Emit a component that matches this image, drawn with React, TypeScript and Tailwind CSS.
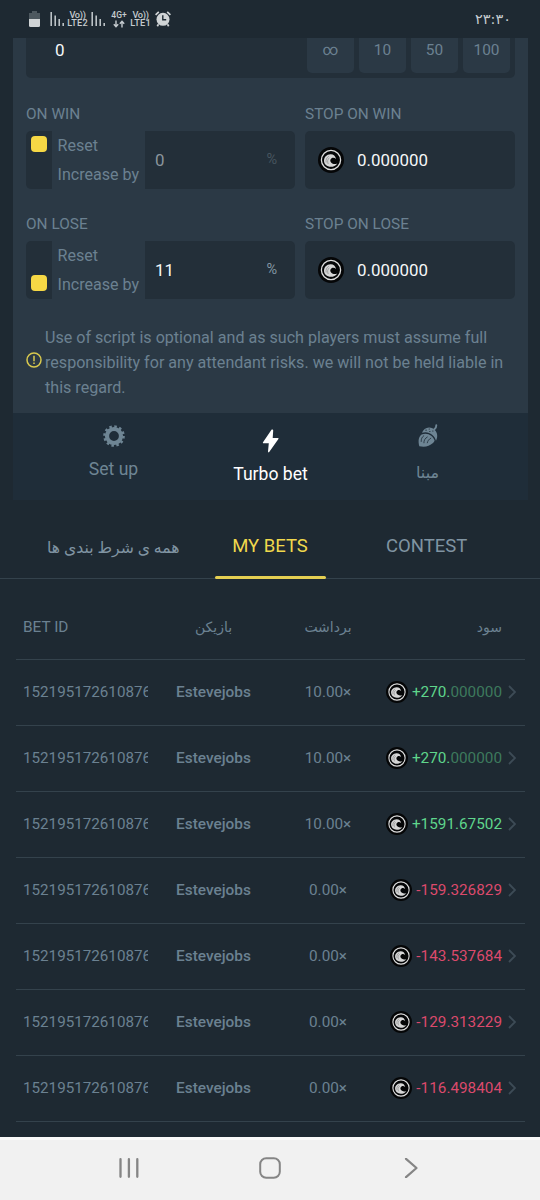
import { useState } from 'react'
import type { ReactNode } from 'react'
import clsx from 'clsx'

type Bet = {
  id: string
  player: string
  payout: string
  profit: string
  rest?: string
}

const BETS: Bet[] = [
  { id: '152195172610876', player: 'Estevejobs', payout: '10.00×', profit: '+270.', rest: '000000' },
  { id: '152195172610876', player: 'Estevejobs', payout: '10.00×', profit: '+270.', rest: '000000' },
  { id: '152195172610876', player: 'Estevejobs', payout: '10.00×', profit: '+1591.67502' },
  { id: '152195172610876', player: 'Estevejobs', payout: '0.00×', profit: '-159.326829' },
  { id: '152195172610876', player: 'Estevejobs', payout: '0.00×', profit: '-143.537684' },
  { id: '152195172610876', player: 'Estevejobs', payout: '0.00×', profit: '-129.313229' },
  { id: '152195172610876', player: 'Estevejobs', payout: '0.00×', profit: '-116.498404' },
]

const PRESETS = ['∞', '10', '50', '100']

const Coin = ({ className }: { className: string }) => (
  <svg viewBox="0 0 26 26" className={clsx('shrink-0', className)}>
    <circle cx="13" cy="13" r="13" fill="#050607" />
    <circle cx="13" cy="13" r="9.6" fill="none" stroke="#dedede" strokeWidth="1.3" />
    <path
      d="M18 12C17.500 9.200 15.500 7.200 12.500 7.300 8.600 7.400 6 10.200 6 13.700c0 3.400 3 6.100 6.700 6.100 2.700 0 5.200-1.200 6.600-3.400-2 1-4.600.9-6-.6-1.500-1.500-1.300-3.700.3-4.600 1.500-.8 3.200-.4 4.400.8z"
      fill="#d6d6d6"
    />
    <path d="M15 12.500c-1 .1-1.500.8-1.300 1.700" stroke="#050607" strokeWidth="1.300" fill="none" />
    <path d="M8.200 15.500c-.6-2.700.5-5 2.600-6.200M10.200 17c-1.100-2.500-.6-4.900 1.300-6.300" stroke="#777" strokeWidth=".6" fill="none" />
  </svg>
)

const SignalIcon = () => (
  <svg viewBox="0 0 15 16" className="h-4 w-[15px]" stroke="#c5cbcf" strokeWidth="1.500">
    <path d="M1.200 1v14M5.200 4.500V15M9.200 8v7M13.200 12v3" />
  </svg>
)

const VolteLabel = ({ sim }: { sim: string }) => (
  <div className="flex w-[21px] flex-col items-center text-[9.200px] leading-[8.500px] font-medium text-[#c5cbcf]">
    <span className="tracking-[-0.300px]">Vo))</span>
    <span className="tracking-[0.200px]">{sim}</span>
  </div>
)

const StatusBar = () => (
  <div className="flex h-[38px] items-center justify-between pr-[29px] pl-[29px]">
    <div className="flex items-center">
      <svg viewBox="0 0 11 16" className="h-4 w-[11px]">
        <path d="M3 0h5v2h3v6H0V2h3z" fill="#4d585f" />
        <path d="M0 8h11v6.500a1.500 1.500 0 0 1-1.500 1.500h-8A1.500 1.500 0 0 1 0 14.500z" fill="#d0d4d6" />
      </svg>
      <div className="ml-[10px] flex items-center">
        <SignalIcon />
        <div className="ml-[2px]"><VolteLabel sim="LTE2" /></div>
        <div className="ml-[3px]"><SignalIcon /></div>
      </div>
      <div className="ml-1 flex w-[18px] flex-col items-center text-[#c5cbcf]">
        <span className="text-[8.500px] leading-[9px] font-medium">4G+</span>
        <svg viewBox="0 0 12 8" className="h-2 w-3" stroke="#c5cbcf" strokeWidth="1.400" fill="none">
          <path d="M3 .5v6M.8 4.300 3 6.700l2.200-2.400M9 7.500v-6M6.800 3.700 9 1.300l2.200 2.400" />
        </svg>
      </div>
      <div className="ml-[2px]"><VolteLabel sim="LTE1" /></div>
      <svg viewBox="0 0 16 16" className="ml-[4px] size-4">
        <circle cx="8" cy="8.300" r="6.500" fill="#d0d4d6" />
        <path d="M.6 3.900 3.800.9M15.400 3.900 12.200.9M3.500 13.200l-1.200 2M12.500 13.200l1.200 2" stroke="#d0d4d6" strokeWidth="1.700" />
        <path d="M7.800 4.300v4.400h3.400" fill="none" stroke="#1e2a33" strokeWidth="1.400" />
      </svg>
    </div>
    <span className="font-['DejaVu_Sans'] text-[14.500px] leading-4 tracking-[-0.900px] text-[#c5cbcf]">۲۳:۳۰</span>
  </div>
)

type StrategyProps = {
  title: string
  stopTitle: string
  increase: boolean
  value: string
  onToggle: () => void
}

const StrategyRow = ({ title, stopTitle, increase, value, onToggle }: StrategyProps) => (
  <div className="flex gap-[10px]">
    <div className="w-[269px]">
      <div className="h-[27px] text-[15.400px] leading-[21px]">{title}</div>
      <div className="flex h-[58px]">
        <button
          onClick={onToggle}
          className={clsx(
            'flex w-[26px] flex-col items-center rounded-l-[5px] bg-[#232f39] px-[5px]',
            increase ? 'justify-end pb-2' : 'justify-start pt-[5px]',
          )}
        >
          <span className="size-4 rounded-[4px] bg-[#f6d845]" />
        </button>
        <div className="flex w-[93px] flex-col pt-px pl-[5.500px] text-[16.100px] whitespace-nowrap">
          <span className="h-[29px] leading-[27px]">Reset</span>
          <span className="leading-[27px]">Increase by</span>
        </div>
        <div className="flex flex-1 items-center justify-between rounded-r-[5px] bg-[#232f39] pr-[18px] pl-[10px]">
          <span className={clsx('mt-px text-[16.900px]', increase ? 'text-[#f5f7f8]' : 'text-[#8b959c]')}>{value}</span>
          <span className={clsx('text-[14.500px]', increase ? 'text-[#8497a3]' : 'text-[#47555f]')}>%</span>
        </div>
      </div>
    </div>
    <div className="w-[210px]">
      <div className="h-[27px] text-[15.400px] leading-[21px]">{stopTitle}</div>
      <div className="flex h-[58px] items-center rounded-[5px] bg-[#232f39] pl-[13px]">
        <Coin className="size-[26px]" />
        <span className="mt-px ml-[13px] text-[16.900px] text-[#f5f7f8]">0.000000</span>
      </div>
    </div>
  </div>
)

type ModeTabProps = {
  icon: ReactNode
  label: string
  active?: boolean
  labelClass?: string
}

const ModeTab = ({ icon, label, active, labelClass }: ModeTabProps) => (
  <button
    className={clsx(
      'flex flex-1 flex-col items-center leading-6',
      active ? 'pt-4 text-white' : 'pt-[11px] text-[#6e8594]',
    )}
  >
    {icon}
    <span className={clsx('mt-[9px]', labelClass ?? 'text-[17.600px]')}>{label}</span>
  </button>
)

const GearIcon = () => (
  <svg viewBox="0 0 24 24" className="size-6 shrink-0">
    <circle cx="12" cy="12" r="7" fill="none" stroke="#6e8594" strokeWidth="4.200" />
    <circle cx="12" cy="12" r="9.500" fill="none" stroke="#6e8594" strokeWidth="2.600" strokeDasharray="2.487 2.487" />
  </svg>
)

const BoltIcon = () => (
  <svg viewBox="0 0 18 24" className="h-6 w-[18px] shrink-0" fill="#fff">
    <path d="M9.500.8 1 13.300c-.3.500 0 1 .5 1h5.300L6 22.600c-.1.800.8 1.100 1.200.5l9.200-13c.3-.500 0-1-.5-1h-5.200l.5-7.700c0-.9-1.200-1.200-1.700-.6z" />
  </svg>
)

const AcornIcon = () => (
  <svg viewBox="0 0 22 24" className="h-6 w-[22px] shrink-0">
    <path d="M4.600 10.400C1.300 13 1 17.300 2.300 22.300c5.400 1.200 10 .2 13.700-3.200.9-.9 1.400-1.700 1.600-2.500C16 11.500 10.500 8 4.600 10.400z" fill="#6e8594" />
    <path d="M5 8.800c1.500-4.700 6.500-7 11-4.200 4.500 2.900 5.300 8 3 12.200C17.400 10.800 11.500 6.800 5 8.800z" fill="#6e8594" />
    <path d="M17.300 5.400c1.400-.8 2-2 2-4.200" fill="none" stroke="#6e8594" strokeWidth="1.900" strokeLinecap="round" />
    <path d="M4.200 17.500c-.2-2.600.8-4.500 2.600-5.800M6.900 18.800c-.1-2.500 1.200-4.600 3.400-5.800M10.300 18.800c.4-2 1.500-3.500 3.500-4.600" fill="none" stroke="#1f2d39" strokeWidth=".8" strokeLinecap="round" />
    <path d="M9 6.200h.1M12.200 5h.1M12.800 7.500h.1M15.800 7h.1" stroke="#1f2d39" strokeWidth="1.200" strokeLinecap="round" />
  </svg>
)

const BetRow = ({ bet }: { bet: Bet }) => {
  const won = bet.profit.startsWith('+')
  return (
    <div className="flex h-[66px] items-center border-b border-[#34424c] pl-[7px] text-[15.300px]">
      <span className="w-[125px] overflow-hidden text-[15.200px] whitespace-nowrap">{bet.id}</span>
      <span className="w-[131px] text-center text-[15.400px] font-medium">{bet.player}</span>
      <span className="w-[98px] text-center">{bet.payout}</span>
      <div className="flex flex-1 items-center justify-end">
        <Coin className="mb-px size-[22px]" />
        <span className={clsx('ml-1', won ? 'text-[#5fd68c]' : 'text-[#dc4a6c]')}>
          {bet.profit}
          {bet.rest && <span className="text-[#3d7a5d]">{bet.rest}</span>}
        </span>
        <svg viewBox="0 0 8 14" className="mr-[9px] mb-px ml-[6px] h-[14px] w-2" fill="none" stroke="#3d4b56" strokeWidth="1.800">
          <path d="m1 1 6 6-6 6" />
        </svg>
      </div>
    </div>
  )
}

export default function App() {
  const [winIncrease, setWinIncrease] = useState(false)
  const [loseIncrease, setLoseIncrease] = useState(true)

  return (
    <div className="flex h-[1200px] w-[540px] flex-col overflow-hidden bg-[#1e2932] font-[Roboto,'DejaVu_Sans',sans-serif] text-[#6b8191]">
      <StatusBar />

      {/* Script settings */}
      <div className="mr-3 ml-[13px] h-[375px] shrink-0 bg-[#2b3945] px-[13px]">
        <div className="flex h-10 justify-between rounded-b-[5px] bg-[#232f39] pr-[5px] pb-[5px] pl-[29px]">
          <span className="text-[17px] leading-[24px] text-[#f5f7f8]">0</span>
          <div className="flex gap-[5px]">
            {PRESETS.map(p => (
              <button key={p} className="w-[47px] rounded-b-[5px] bg-[#2b3945] pb-[11px] text-[15.400px] leading-[24px] text-[#6b8191]">
                {p}
              </button>
            ))}
          </div>
        </div>

        <div className="mt-[26px] flex flex-col gap-[25px]">
          <StrategyRow
            title="ON WIN"
            stopTitle="STOP ON WIN"
            increase={winIncrease}
            value="0"
            onToggle={() => setWinIncrease(!winIncrease)}
          />
          <StrategyRow
            title="ON LOSE"
            stopTitle="STOP ON LOSE"
            increase={loseIncrease}
            value="11"
            onToggle={() => setLoseIncrease(!loseIncrease)}
          />
        </div>

        <div className="mt-[26px] flex items-center">
          <svg viewBox="0 0 16 16" className="mr-[3px] mb-[5px] size-4 shrink-0" fill="none" stroke="#d8c94e" strokeWidth="1.500">
            <circle cx="8" cy="8" r="7" />
            <path d="M8 3.800v5.400M8 10.500V12" />
          </svg>
          <p className="text-[16.100px] leading-[25px] whitespace-nowrap">
            Use of script is optional and as such players must assume full
            <br />
            responsibility for any attendant risks. we will not be held liable in
            <br />
            this regard.
          </p>
        </div>
      </div>

      {/* Bet modes */}
      <div className="mr-3 ml-[13px] flex h-[87px] shrink-0 bg-[#1f2d39] px-[22px]">
        <ModeTab icon={<GearIcon />} label="Set up" />
        <ModeTab icon={<BoltIcon />} label="Turbo bet" active />
        <ModeTab icon={<AcornIcon />} label="مبنا" labelClass="pt-[4px] text-[16px]" />
      </div>

      {/* Tabs */}
      <div className="flex h-[79px] shrink-0 border-b border-[#34424c] px-[35px] pt-[33px] text-[18.500px] leading-[26px] text-[#8094a2]">
        <div dir="rtl" className="flex-1 pt-0.5 text-center text-[15.700px]">همه ی شرط بندی ها</div>
        <div className="flex flex-1 flex-col items-center text-[#f0d84c]">
          MY BETS
          <span className="mt-[17px] h-[3px] w-[111px] shrink-0 rounded-sm bg-[#e5cf52]" />
        </div>
        <div className="flex-1 text-center">CONTEST</div>
      </div>

      {/* Bets table */}
      <div className="mr-[15px] ml-4 h-[558px] shrink-0 overflow-hidden pt-[15px]">
        <div className="flex h-[66px] items-center border-b border-[#34424c] pt-0.5 pl-[7px] text-[14px]">
          <span className="w-[125px] text-[15.400px]">BET ID</span>
          <span className="w-[131px] text-center">بازیکن</span>
          <span className="w-[98px] text-center">برداشت</span>
          <span className="flex-1 pr-[23px] text-right">سود</span>
        </div>
        {BETS.map((bet, i) => (
          <BetRow key={i} bet={bet} />
        ))}
      </div>

      {/* System navigation */}
      <div className="flex h-[63px] shrink-0 items-center justify-center gap-[120px] border-t-[3px] border-[#fafafa] bg-[#f1f1f1] pb-1">
        <svg viewBox="0 0 20 20" className="size-5" stroke="#858585" strokeWidth="2.300" strokeLinecap="round">
          <path d="M1.500 1.200v17.600M9.900 1.200v17.600M18.300 1.200v17.600" />
        </svg>
        <svg viewBox="0 0 22 22" className="size-[22px]" fill="none" stroke="#858585" strokeWidth="2">
          <rect x="1.200" y="1.200" width="19.600" height="19.600" rx="6" />
        </svg>
        <svg viewBox="0 0 20 20" className="size-5" fill="none" stroke="#858585" strokeWidth="2.200" strokeLinecap="round" strokeLinejoin="round">
          <path d="m5 .8 10.500 9.200L5 19.200" />
        </svg>
      </div>
    </div>
  )
}
